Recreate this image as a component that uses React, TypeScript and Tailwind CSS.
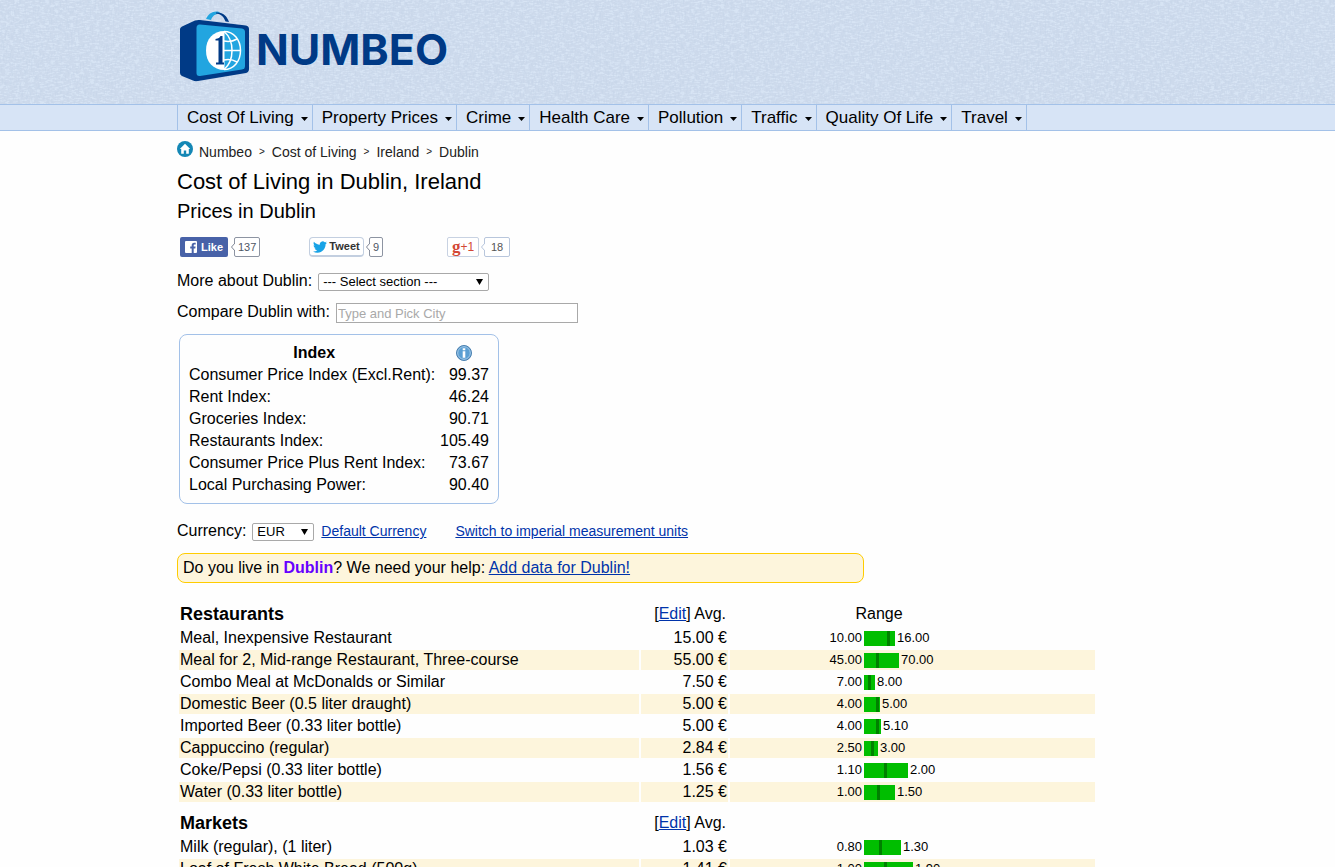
import React from "react";

const menu = [
  "Cost Of Living",
  "Property Prices",
  "Crime",
  "Health Care",
  "Pollution",
  "Traffic",
  "Quality Of Life",
  "Travel",
];

const indices: [string, string][] = [
  ["Consumer Price Index (Excl.Rent):", "99.37"],
  ["Rent Index:", "46.24"],
  ["Groceries Index:", "90.71"],
  ["Restaurants Index:", "105.49"],
  ["Consumer Price Plus Rent Index:", "73.67"],
  ["Local Purchasing Power:", "90.40"],
];

type Price = {
  name: string;
  avg: string;
  low: string;
  high: string;
  before: number;
  after: number;
};

const restaurants: Price[] = [
  { name: "Meal, Inexpensive Restaurant", avg: "15.00", low: "10.00", high: "16.00", before: 23, after: 5 },
  { name: "Meal for 2, Mid-range Restaurant, Three-course", avg: "55.00", low: "45.00", high: "70.00", before: 12, after: 20 },
  { name: "Combo Meal at McDonalds or Similar", avg: "7.50", low: "7.00", high: "8.00", before: 4, after: 4 },
  { name: "Domestic Beer (0.5 liter draught)", avg: "5.00", low: "4.00", high: "5.00", before: 12, after: 1 },
  { name: "Imported Beer (0.33 liter bottle)", avg: "5.00", low: "4.00", high: "5.10", before: 12, after: 2 },
  { name: "Cappuccino (regular)", avg: "2.84", low: "2.50", high: "3.00", before: 7, after: 4 },
  { name: "Coke/Pepsi (0.33 liter bottle)", avg: "1.56", low: "1.10", high: "2.00", before: 20, after: 21 },
  { name: "Water (0.33 liter bottle)", avg: "1.25", low: "1.00", high: "1.50", before: 13, after: 15 },
];

const markets: Price[] = [
  { name: "Milk (regular), (1 liter)", avg: "1.03", low: "0.80", high: "1.30", before: 15, after: 19 },
  { name: "Loaf of Fresh White Bread (500g)", avg: "1.41", low: "1.00", high: "1.90", before: 20, after: 26 },
];

function Texture() {
  return (
    <svg className="absolute inset-0 h-full w-full" aria-hidden="true">
      <filter id="weft" x="0" y="0" width="100%" height="100%" colorInterpolationFilters="sRGB">
        <feTurbulence type="fractalNoise" baseFrequency="0.2 0.6" numOctaves="2" seed="4" />
        <feColorMatrix values="0 0 0 0 0.87  0 0 0 0 0.92  0 0 0 0 0.98  5 0 0 0 -2.3" />
      </filter>
      <filter id="warp" x="0" y="0" width="100%" height="100%" colorInterpolationFilters="sRGB">
        <feTurbulence type="fractalNoise" baseFrequency="0.6 0.2" numOctaves="2" seed="9" />
        <feColorMatrix values="0 0 0 0 0.77  0 0 0 0 0.83  0 0 0 0 0.91  5 0 0 0 -2.4" />
      </filter>
      <rect width="100%" height="100%" filter="url(#weft)" opacity="0.6" />
      <rect width="100%" height="100%" filter="url(#warp)" opacity="0.4" />
    </svg>
  );
}

function Logo() {
  return (
    <svg className="h-[72px] w-[70px] shrink-0" viewBox="0 0 70 72" aria-hidden="true">
      <path d="M26 8C28 3 32 0 38 0.500L42 3C36 2 33 4 31 9Z" fill="#22a5e0" />
      <path d="M36 1.500C43 1 47 5 49 11L45.500 10.500C44 6 41 3 36 2.500Z" fill="#003a86" />
      <path d="M2 15.500L15 9.500Q17 8.800 20 9L66 14.500Q69 15 69 18V58Q69 61 66 62L18 70Q15 70.500 13 69.500L2 65Q0 64 0 62V18Q0 16.500 2 15.500Z" fill="#003a86" />
      <path d="M20 13.500L62 17.500Q65 18 65 21V55Q65 58 62 58.500L20 65Q16.500 65.500 16.500 62V17Q16.500 13.300 20 13.500Z" fill="#22a5e0" />
      <path d="M44.500 20C33 20 26 28 26 39.500S33 59 44.500 59Z" fill="#fff" />
      <g fill="none" stroke="#fff" strokeWidth="1.500">
        <path d="M44 20.500C54 20.500 60.500 29 60.500 39.500S54 58.500 44 58.500" />
        <path d="M44 20.500C49.500 25 52 32 52 39.500S49.500 54 44 58.500" />
        <path d="M44 39.500H60.500M44 30Q51 31.500 57 28M44 49Q51 47.500 57 51" />
      </g>
      <path d="M42.500 25V51.500H44V53.500H36V51.500H38.500V29.500H35.500V28C38.500 27.500 40 26.500 40.500 25Z" fill="#003a86" />
    </svg>
  );
}

function HomeIcon() {
  return (
    <svg className="size-4" viewBox="0 0 16 16" aria-hidden="true">
      <circle cx="8" cy="8" r="8" fill="#1487b5" />
      <path d="M8 2.800L2.800 8H4.200V12.700H6.800V9.500H9.200V12.700H11.800V8H13.200Z" fill="#fff" />
    </svg>
  );
}

function InfoIcon() {
  return (
    <svg className="size-4" viewBox="0 0 16 16" aria-hidden="true">
      <circle cx="8" cy="8" r="7.500" fill="#4b8dc4" stroke="#4a80b0" />
      <circle cx="8" cy="8" r="6.300" fill="#5b9fd3" stroke="#a9cdea" />
      <path d="M6.700 3.200H9.300V5.200H6.700ZM6.700 6.200H9.300V12.800H6.700Z" fill="#fff" />
    </svg>
  );
}

function Count({ value, tone }: { value: string; tone: "dark" | "light" }) {
  const stroke = tone === "dark" ? "#7f8796" : "#b6c5dc";
  return (
    <span className="flex items-center">
      <svg className="relative left-px h-2 w-1" viewBox="0 0 4 8" aria-hidden="true">
        <path d="M4 0L0.500 4L4 8" fill="#fff" stroke={stroke} />
      </svg>
      <span
        className={
          tone === "dark"
            ? "flex h-5 items-center rounded-xs border border-[#8d94a2] bg-white px-[3px] text-[11px] text-[#4e5665]"
            : "flex h-5 items-center rounded-xs border border-[#b8c6dc] bg-white px-1.5 text-[11px] text-[#555555]"
        }
      >
        {value}
      </span>
    </span>
  );
}

function SocialButtons() {
  return (
    <div className="mt-[14px] flex items-center pl-[3px]">
      <div className="flex w-[129px] items-center gap-0.5">
        <button className="flex h-5 w-12 items-center justify-center gap-1 rounded-xs bg-[#4862a8] text-[11px] font-bold text-white">
          <svg className="size-3" viewBox="0 0 12 12" aria-hidden="true">
            <path d="M1 0H11Q12 0 12 1V11Q12 12 11 12H8.700V7.500H10.300L10.600 5.600H8.700V4.500C8.700 3.900 9 3.500 9.700 3.500H10.700V1.800H9.200C7.500 1.800 6.700 2.900 6.700 4.300V5.600H5.200V7.500H6.700V12H1Q0 12 0 11V1Q0 0 1 0Z" fill="#fff" />
          </svg>
          Like
        </button>
        <Count value="137" tone="dark" />
      </div>
      <div className="flex w-[138px] items-center gap-px">
        <button className="flex h-5 w-[55px] items-center justify-center gap-0.5 rounded-sm border border-b-2 border-[#c3cfe0] bg-white text-[11px] font-bold text-[#333333]">
          <svg className="h-3 w-[14px]" viewBox="0 0 24 20" aria-hidden="true">
            <path d="M23.950 2.570a10 10 0 0 1-2.820.770 4.960 4.960 0 0 0 2.160-2.720c-.950.560-2 .960-3.130 1.190a4.920 4.920 0 0 0-8.380 4.480C7.690 6.090 4.070 4.130 1.640 1.160a4.820 4.820 0 0 0-.670 2.480c0 1.710.870 3.210 2.190 4.100a4.900 4.900 0 0 1-2.230-.620v.060a4.920 4.920 0 0 0 3.950 4.830 5 5 0 0 1-2.210.080 4.940 4.940 0 0 0 4.600 3.420A9.870 9.870 0 0 1 0 17.540a13.990 13.990 0 0 0 7.550 2.210c9.050 0 14-7.500 14-13.980 0-.210 0-.420-.020-.630a9.940 9.940 0 0 0 2.460-2.550z" fill="#19a3e6" />
          </svg>
          Tweet
        </button>
        <Count value="9" tone="dark" />
      </div>
      <div className="flex items-center gap-px">
        <button className="flex h-5 w-8 items-center justify-center rounded-xs border border-[#c8d2e2] bg-white text-[#d34836]">
          <span className="font-['Liberation_Serif',serif] text-[17px] leading-4 font-bold">g</span>
          <span className="text-[12px]">+1</span>
        </button>
        <Count value="18" tone="light" />
      </div>
    </div>
  );
}

const cell = "h-5 p-0 px-px align-middle leading-5";
const link = "text-[#0033aa] underline";

function PriceRow({ item, shaded }: { item: Price; shaded: boolean }) {
  return (
    <tr className={shaded ? "*:bg-[#fdf5dc]" : ""}>
      <td className={cell}>{item.name}</td>
      <td className={`${cell} text-right`}>{item.avg} €</td>
      <td className={cell}>
        <div className="flex items-center gap-0.5 text-[13px]">
          <span className="w-[131px] text-right">{item.low}</span>
          <span className="flex h-[15px] bg-[#00be00]">
            <span style={{ width: item.before }} />
            <span className="w-[3px] bg-[#008000]" />
            <span style={{ width: item.after }} />
          </span>
          <span>{item.high}</span>
        </div>
      </td>
    </tr>
  );
}

function SectionHead({ title, range }: { title: string; range?: string }) {
  return (
    <tr>
      <th className="h-[27px] px-px pt-1 pb-0.5 text-left text-[18px] leading-5 font-bold">{title}</th>
      <th className="px-0.5 pt-1 pb-0.5 text-right leading-5 font-normal">
        [<a href="#edit" className={link}>Edit</a>] Avg.
      </th>
      <th className="px-px pt-1 pb-0.5 text-center leading-5 font-normal">
        <div className="w-[296px]">{range}</div>
      </th>
    </tr>
  );
}

export default function App() {
  return (
    <div className="min-h-screen bg-[#fefefe] font-['Liberation_Sans',Arial,sans-serif] text-[16px] text-black">
      <header className="relative h-[104px] bg-[#cddaec]">
        <Texture />
        <div className="relative mx-auto flex max-w-[981px] pt-[11px] pl-[3px]">
          <a href="#home" className="flex items-center gap-1.5" aria-label="Numbeo">
            <Logo />
            <span className="pt-1 font-[Inter,sans-serif] text-[43px] leading-none font-bold text-[#003a86]">NUMBEO</span>
          </a>
        </div>
      </header>

      <nav className="border-y border-[#a3c1e8] bg-[#d7e4f6]">
        <ul className="mx-auto flex max-w-[981px]">
          {menu.map((label) => (
            <li key={label} className="border-r border-[#a3c1e8] first:border-l">
              <a href="#menu" className="flex h-[25px] items-center gap-[7px] pr-1 pl-[9px] text-[17px]">
                {label}
                <svg className="mt-0.5 h-1 w-[7px]" viewBox="0 0 7 4" aria-hidden="true">
                  <path d="M0 0H7L3.500 4Z" />
                </svg>
              </a>
            </li>
          ))}
        </ul>
      </nav>

      <main className="mx-auto max-w-[981px]">
        <div className="flex items-center gap-[7px] pt-[11px] text-[14px] leading-5 text-[#222222]">
          <span className="-mt-1.5"><HomeIcon /></span>
          <a href="#numbeo" className="-ml-px">Numbeo</a>
          <span className="text-[10px]">&gt;</span>
          <a href="#cost">Cost of Living</a>
          <span className="text-[10px]">&gt;</span>
          <a href="#ireland">Ireland</a>
          <span className="text-[10px]">&gt;</span>
          <a href="#dublin">Dublin</a>
        </div>

        <h1 className="mt-1.5 text-[22px] leading-7">Cost of Living in Dublin, Ireland</h1>
        <h2 className="mt-[3px] text-[20px] leading-6">Prices in Dublin</h2>

        <SocialButtons />

        <div className="mt-[14px] flex items-center gap-1.5">
          <label htmlFor="section" className="leading-5">More about Dublin:</label>
          <span className="relative mt-0.5 flex">
            <select id="section" className="h-[18px] w-[171px] appearance-none rounded-xs border border-[#a9a9a9] bg-white pl-1 text-[13px] leading-4">
              <option>--- Select section ---</option>
            </select>
            <svg className="pointer-events-none absolute top-1.5 right-1.5 h-1.5 w-[7px]" viewBox="0 0 7 6" aria-hidden="true">
              <path d="M0 0H7L3.500 6Z" />
            </svg>
          </span>
        </div>

        <div className="mt-2.5 flex items-center gap-1.5">
          <label htmlFor="compare" className="leading-5">Compare Dublin with:</label>
          <input id="compare" placeholder="Type and Pick City" className="mt-0.5 h-5 w-[242px] border border-[#a9a9a9] bg-white px-px text-[13px] placeholder:text-[#a9a9a9]" />
        </div>

        <div className="mt-[11px] ml-0.5 w-80 rounded-lg border border-[#a3c1e8] px-[9px] py-[7px]">
          <table className="w-full border-collapse">
            <thead>
              <tr>
                <th className="h-[22px] p-0 font-bold leading-[22px]">Index</th>
                <th className="p-0">
                  <span className="flex justify-center"><InfoIcon /></span>
                </th>
              </tr>
            </thead>
            <tbody>
              {indices.map(([name, value]) => (
                <tr key={name}>
                  <td className="h-[22px] p-0 leading-[22px]">{name}</td>
                  <td className="p-0 text-right leading-[22px]">{value}</td>
                </tr>
              ))}
            </tbody>
          </table>
        </div>

        <div className="mt-[15px] flex items-center text-[14px]">
          <label htmlFor="currency" className="text-[16px] leading-5">Currency:</label>
          <span className="relative mt-0.5 ml-1.5 flex">
            <select id="currency" className="h-[18px] w-[62px] appearance-none rounded-xs border border-[#a9a9a9] bg-white pl-1 text-[13px] leading-4">
              <option>EUR</option>
            </select>
            <svg className="pointer-events-none absolute top-1.5 right-1.5 h-1.5 w-[7px]" viewBox="0 0 7 6" aria-hidden="true">
              <path d="M0 0H7L3.500 6Z" />
            </svg>
          </span>
          <a href="#default" className="mt-0.5 ml-[7px] text-[#0033aa] underline">Default Currency</a>
          <a href="#units" className="mt-0.5 ml-[29px] text-[#0033aa] underline">Switch to imperial measurement units</a>
        </div>

        <p className="mt-[11px] w-[687px] max-w-full rounded-lg border border-[#ffcc00] bg-[#fdf5dc] px-[5px] leading-7">
          Do you live in <b className="text-[#6600ff]">Dublin</b>? We need your help:{" "}
          <a href="#add" className={link}>Add data for Dublin!</a>
        </p>

        <table className="mt-[14px] w-[920px] table-fixed border-separate border-spacing-0.5">
          <colgroup>
            <col className="w-[460px]" />
            <col className="w-[87px]" />
            <col />
          </colgroup>
          <tbody>
            <SectionHead title="Restaurants" range="Range" />
            {restaurants.map((item, i) => (
              <PriceRow key={item.name} item={item} shaded={i % 2 === 1} />
            ))}
            <tr><td colSpan={3} className="h-0.5 p-0" /></tr>
            <SectionHead title="Markets" />
            {markets.map((item, i) => (
              <PriceRow key={item.name} item={item} shaded={i % 2 === 1} />
            ))}
          </tbody>
        </table>
      </main>
    </div>
  );
}
